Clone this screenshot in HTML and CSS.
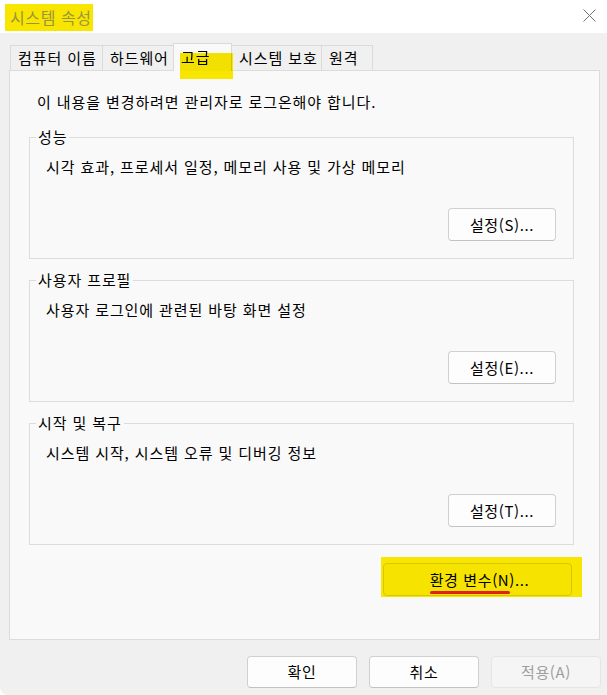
FILE: index.html
```html
<!DOCTYPE html>
<html lang="ko">
<head>
<meta charset="utf-8">
<title>시스템 속성</title>
<link rel="stylesheet" href="styles.css">
</head>
<body>
<div class="window">
  <div class="titlebar">
    <span class="title">시스템 속성</span>
    <svg class="close" width="13" height="13" viewBox="0 0 13 13"><path d="M0.5 0.5 L12.5 12.5 M12.5 0.5 L0.5 12.5" stroke="#707070" stroke-width="1" fill="none"/></svg>
  </div>
  <div class="content">
    <div class="tabs">
      <div class="tab t1">컴퓨터 이름</div>
      <div class="tab t2">하드웨어</div>
      <div class="tab t3 active">고급<span class="mark"></span></div>
      <div class="tab t4">시스템 보호</div>
      <div class="tab t5">원격</div>
    </div>
    <div class="panel">
      <p class="notice">이 내용을 변경하려면 관리자로 로그온해야 합니다.</p>
      <fieldset class="group">
        <legend>성능</legend>
        <p class="desc">시각 효과, 프로세서 일정, 메모리 사용 및 가상 메모리</p>
        <div class="btn-row"><button class="btn">설정(S)...</button></div>
      </fieldset>
      <fieldset class="group">
        <legend>사용자 프로필</legend>
        <p class="desc">사용자 로그인에 관련된 바탕 화면 설정</p>
        <div class="btn-row"><button class="btn">설정(E)...</button></div>
      </fieldset>
      <fieldset class="group">
        <legend>시작 및 복구</legend>
        <p class="desc">시스템 시작, 시스템 오류 및 디버깅 정보</p>
        <div class="btn-row"><button class="btn">설정(T)...</button></div>
      </fieldset>
      <div class="env-row">
        <div class="hl"><button class="btn env"><span class="ul">환경 변수</span>(N)...</button></div>
      </div>
    </div>
    <div class="footer">
      <button class="btn foot">확인</button>
      <button class="btn foot">취소</button>
      <button class="btn foot disabled">적용(A)</button>
    </div>
  </div>
</div>
</body>
</html>
```
FILE: styles.css
```css
* { box-sizing: border-box; }
html, body { margin: 0; padding: 0; background: #ffffff; }
body {
  font-family: "Noto Sans CJK KR", "Noto Sans", sans-serif;
  font-size: 15px;
  letter-spacing: 0.9px;
  line-height: 20px;
  color: #000;
}
.window {
  width: 607px;
  height: 695px;
  background: #f0f0f0;
  border-bottom-left-radius: 8px;
  display: flex;
  flex-direction: column;
  overflow: hidden;
}
.titlebar {
  height: 33px;
  background: #ffffff;
  display: flex;
  align-items: flex-start;
  justify-content: space-between;
  padding: 4px 11px 0 5px;
}
.title {
  background: #f8e600;
  color: #9a9440;
  font-size: 16px;
  letter-spacing: 0.6px;
  height: 27px;
  line-height: 27px;
  padding: 0 1px 0 5px;
}
.close { margin-top: 5px; }
.content {
  padding: 10px 7px 0 9px;
  display: flex;
  flex-direction: column;
}
.tabs {
  display: flex;
  align-items: flex-end;
  height: 27px;
  margin-left: 1px;
  position: relative;
  z-index: 2;
}
.tab {
  height: 25px;
  line-height: 24px;
  border: 1px solid #dadada;
  border-bottom: none;
  background: #f0f0f0;
  padding: 0 0 0 7px;
  margin-right: -1px;
  white-space: nowrap;
}
.t1 { width: 93px; }
.t2 { width: 72px; }
.t3 { width: 59px; }
.t4 { width: 91px; }
.t5 { width: 52px; }
.tab.active {
  height: 28px;
  margin-bottom: -1px;
  background: #f9f9f9;
  padding-top: 1px;
  position: relative;
  z-index: 3;
}
.mark {
  position: absolute;
  left: 6px;
  top: 9px;
  width: 53px;
  height: 26px;
  background: #f8e600;
  mix-blend-mode: multiply;
}
.panel {
  height: 570px;
  border: 1px solid #dcdcdc;
  background: #f9f9f9;
  display: flex;
  flex-direction: column;
}
.notice {
  margin: 21px 0 0 27px;
}
.group {
  margin: 15px 25px 0 19px;
  padding: 0 0 17px 0;
  border: 1px solid #dcdcdc;
  min-width: 0;
}
.group + .group { margin-top: 11px; }
.group legend {
  margin-left: 6px;
  padding: 0 2px;
  line-height: 20px;
}
.desc { margin: 10px 0 0 16px; }
.btn-row {
  display: flex;
  justify-content: flex-end;
  margin-top: 31px;
  padding-right: 17px;
}
.btn {
  font-family: inherit;
  font-size: 15px;
  letter-spacing: 0.6px;
  line-height: 20px;
  color: #000;
  background: #fdfdfd;
  border: 1px solid #d0d0d0;
  border-bottom-color: #c2c2c2;
  border-radius: 4px;
  width: 108px;
  height: 33px;
  padding: 0;
}
.env-row {
  display: flex;
  justify-content: flex-end;
  margin: 12px 17px 0 0;
}
.hl {
  background: #f8e600;
  padding: 6px 10px 1px 2px;
}
.btn.env {
  width: 189px;
  height: 33px;
  background: #f6e400;
  border-color: #d6c800;
  padding-left: 4px;
}
.ul { position: relative; }
.ul::after {
  content: "";
  position: absolute;
  left: 0;
  right: -18px;
  bottom: -4px;
  height: 3px;
  border-radius: 2px;
  background: #e0201c;
}
.footer {
  display: flex;
  justify-content: flex-end;
  gap: 12px;
  padding: 16px 0 0 0;
  margin-right: -1px;
}
.btn.foot { width: 110px; height: 32px; }
.btn.disabled {
  background: #f5f5f5;
  border-color: #e5e5e5;
  color: #9d9d9d;
}
```
